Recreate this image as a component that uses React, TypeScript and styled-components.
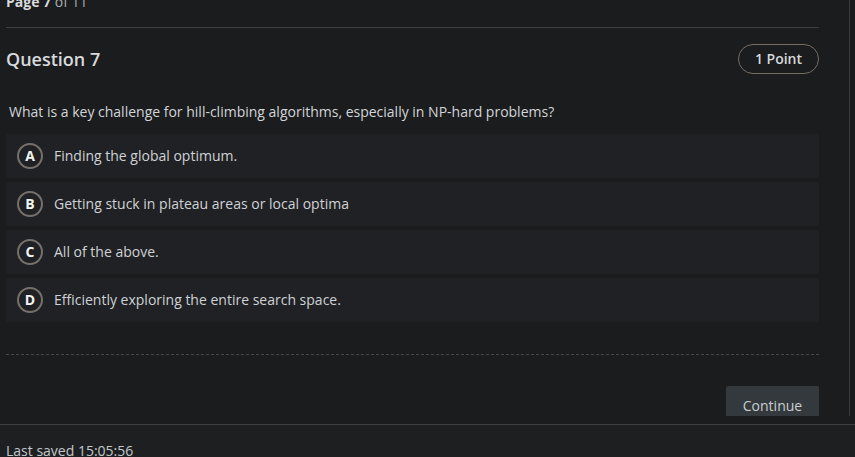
import React, { useLayoutEffect, useRef } from "react";
import styled, { createGlobalStyle } from "styled-components";

const Global = createGlobalStyle`
  html, body { margin: 0; padding: 0; background: #1b1c1e; }
  body { font-family: "Open Sans", "Liberation Sans", sans-serif; color: #d2d5d8; }
  #root { height: 457px; }
`;

const Shell = styled.div`
  height: 457px;
  display: flex;
  flex-direction: column;
  background: #1b1c1e;
  overflow: hidden;
`;

const MainWrap = styled.div`
  padding-bottom: 8px;
  display: flex;
`;

const Scroller = styled.div`
  width: 849px;
  height: 416px;
  border-right: 1px solid #3a3b3d;
  overflow: hidden;
`;

const Content = styled.div`
  padding: 0 30px 40px 6px;
`;

const PageHead = styled.div`
  font-size: 14px;
  line-height: 20px;
  padding-bottom: 15px;
  border-bottom: 1px solid #3c3d3f;
  color: #a9adb2;
  b { color: #d8dadd; font-weight: 700; }
`;

const TitleRow = styled.div`
  display: flex;
  align-items: center;
  justify-content: space-between;
  margin-top: 16px;
  height: 30px;
`;

const Title = styled.h2`
  margin: 0;
  font-size: 18px;
  font-weight: 600;
  color: #d8dadd;
  line-height: 28px;
`;

const Badge = styled.span`
  display: inline-flex;
  align-items: center;
  justify-content: center;
  box-sizing: border-box;
  height: 30px;
  width: 81px;
  border: 1px solid #776d61;
  border-radius: 15px;
  font-size: 14px;
  font-weight: 600;
  color: #d6d9dc;
  padding-bottom: 2px;
`;

const Prompt = styled.p`
  margin: 28px 0 12px;
  padding-left: 3px;
  font-size: 14px;
  line-height: 20px;
  color: #d2d5d8;
`;

const Options = styled.div`
  display: flex;
  flex-direction: column;
  gap: 4px;
`;

const Option = styled.div`
  display: flex;
  align-items: center;
  gap: 11px;
  height: 44px;
  padding-left: 11px;
  padding-bottom: 1px;
  box-sizing: border-box;
  background: #202124;
  border-radius: 2px;
  font-size: 14px;
  color: #cfd2d6;
`;

const Letter = styled.span`
  box-sizing: border-box;
  width: 26px;
  height: 26px;
  border-radius: 50%;
  border: 2px solid #77706a;
  display: flex;
  align-items: center;
  justify-content: center;
  font-size: 14px;
  font-weight: 700;
  color: #f2f3f4;
`;

const Dashed = styled.hr`
  margin: 32px 0 0;
  border: 0;
  border-top: 1px dashed #46474a;
`;

const Actions = styled.div`
  display: flex;
  justify-content: flex-end;
  margin-top: 31px;
`;

const Button = styled.button`
  width: 93px;
  height: 36px;
  border: 0;
  border-radius: 2px;
  background: #33393c;
  color: #c9cdd1;
  font-family: inherit;
  font-size: 14px;
  line-height: 20px;
  text-align: center;
  padding: 10px 0 6px;
`;

const Footer = styled.footer`
  flex: 1;
  border-top: 1px solid #3d3e40;
  background: #1e1f21;
  padding: 16px 6px 0;
  font-size: 14px;
  line-height: 20px;
  color: #c3c7cb;
`;

const options = [
  { key: "A", text: "Finding the global optimum." },
  { key: "B", text: "Getting stuck in plateau areas or local optima" },
  { key: "C", text: "All of the above." },
  { key: "D", text: "Efficiently exploring the entire search space." },
];

export default function App() {
  const ref = useRef<HTMLDivElement>(null);
  useLayoutEffect(() => {
    if (ref.current) ref.current.scrollTop = 8;
  }, []);
  return (
    <Shell>
      <Global />
      <MainWrap>
        <Scroller ref={ref}>
          <Content>
            <PageHead>
              <b>Page 7</b> of 11
            </PageHead>
            <TitleRow>
              <Title>Question 7</Title>
              <Badge>1 Point</Badge>
            </TitleRow>
            <Prompt>What is a key challenge for hill-climbing algorithms, especially in NP-hard problems?</Prompt>
            <Options>
              {options.map((o) => (
                <Option key={o.key}>
                  <Letter>{o.key}</Letter>
                  <span>{o.text}</span>
                </Option>
              ))}
            </Options>
            <Dashed />
            <Actions>
              <Button>Continue</Button>
            </Actions>
          </Content>
        </Scroller>
      </MainWrap>
      <Footer>Last saved 15:05:56</Footer>
    </Shell>
  );
}
